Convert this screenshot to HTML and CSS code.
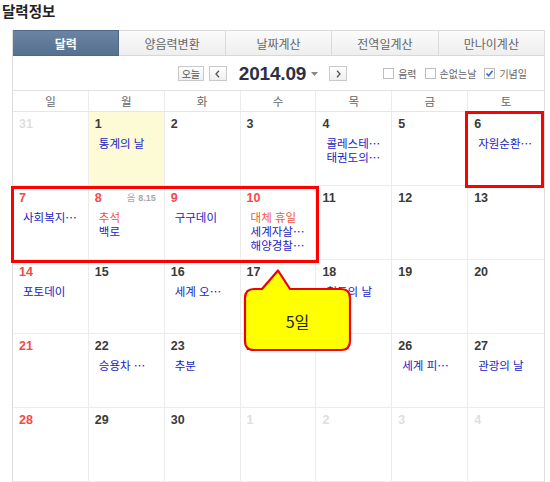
FILE: index.html
```html
<!DOCTYPE html>
<html lang="ko">
<head>
<meta charset="utf-8">
<link rel="stylesheet" href="styles.css">
</head>
<body>
<div class="page">
  <h1 class="title">달력정보</h1>
  <div class="cal">
    <div class="tabs">
      <div class="tab active">달력</div>
      <div class="tab">양음력변환</div>
      <div class="tab">날짜계산</div>
      <div class="tab">전역일계산</div>
      <div class="tab">만나이계산</div>
    </div>
    <div class="toolbar">
      <div class="tb-left">
        <span class="btn today">오늘</span>
        <span class="btn arrow"><svg width="5" height="8" viewBox="0 0 5 8"><path d="M4 0.8 L1 4 L4 7.2" fill="none" stroke="#555" stroke-width="1.3"/></svg></span>
      </div>
      <div class="ym">2014.09<svg class="caret" width="7" height="4" viewBox="0 0 7 4"><path d="M0 0 H7 L3.5 4 Z" fill="#888"/></svg></div>
      <div class="tb-right">
        <span class="btn arrow"><svg width="5" height="8" viewBox="0 0 5 8"><path d="M1 0.8 L4 4 L1 7.2" fill="none" stroke="#555" stroke-width="1.3"/></svg></span>
        <div class="opts">
          <span class="cb"></span><span class="opt-label">음력</span>
          <span class="cb"></span><span class="opt-label">손없는날</span>
          <span class="cb checked"><svg width="9" height="9" viewBox="0 0 9 9"><path d="M1.5 4.5 L3.6 6.8 L7.6 1.8" fill="none" stroke="#2f6fd6" stroke-width="1.6"/></svg></span><span class="opt-label">기념일</span>
        </div>
      </div>
    </div>
    <div class="week-head">
      <div>일</div><div>월</div><div>화</div><div>수</div><div>목</div><div>금</div><div>토</div>
    </div>
    <div class="grid">
      <div class="cell"><div class="num other">31</div></div>
      <div class="cell today-cell"><div class="num">1</div><div class="ev">통계의 날</div></div>
      <div class="cell"><div class="num">2</div></div>
      <div class="cell"><div class="num">3</div></div>
      <div class="cell"><div class="num">4</div><div class="ev">콜레스테…</div><div class="ev">태권도의…</div></div>
      <div class="cell"><div class="num">5</div></div>
      <div class="cell"><div class="num">6</div><div class="ev">자원순환…</div></div>

      <div class="cell"><div class="num red">7</div><div class="ev">사회복지…</div></div>
      <div class="cell"><div class="num red">8</div><span class="lunar">음 <b>8.15</b></span><div class="ev hol">추석</div><div class="ev">백로</div></div>
      <div class="cell"><div class="num red">9</div><div class="ev">구구데이</div></div>
      <div class="cell"><div class="num red">10</div><div class="ev hol">대체 휴일</div><div class="ev">세계자살…</div><div class="ev">해양경찰…</div></div>
      <div class="cell"><div class="num">11</div></div>
      <div class="cell"><div class="num">12</div></div>
      <div class="cell"><div class="num">13</div></div>

      <div class="cell"><div class="num red">14</div><div class="ev">포토데이</div></div>
      <div class="cell"><div class="num">15</div></div>
      <div class="cell"><div class="num">16</div><div class="ev">세계 오…</div></div>
      <div class="cell"><div class="num">17</div></div>
      <div class="cell"><div class="num">18</div><div class="ev">철도의 날</div></div>
      <div class="cell"><div class="num">19</div></div>
      <div class="cell"><div class="num">20</div></div>

      <div class="cell"><div class="num red">21</div></div>
      <div class="cell"><div class="num">22</div><div class="ev">승용차 …</div></div>
      <div class="cell"><div class="num">23</div><div class="ev">추분</div></div>
      <div class="cell"><div class="num">24</div></div>
      <div class="cell"><div class="num">25</div></div>
      <div class="cell"><div class="num">26</div><div class="ev">세계 피…</div></div>
      <div class="cell"><div class="num">27</div><div class="ev">관광의 날</div></div>

      <div class="cell"><div class="num red">28</div></div>
      <div class="cell"><div class="num">29</div></div>
      <div class="cell"><div class="num">30</div></div>
      <div class="cell"><div class="num other">1</div></div>
      <div class="cell"><div class="num other">2</div></div>
      <div class="cell"><div class="num other">3</div></div>
      <div class="cell"><div class="num other">4</div></div>
    </div>
  </div>

  <div class="mark mark-sat"></div>
  <div class="mark mark-week"></div>
  <div class="callout">
    <svg width="110" height="86" viewBox="0 0 110 86"><path d="M11 21 H19 L35 2.5 L47 21 H98 Q107 21 107 30 V73 Q107 82 98 82 H11 Q2 82 2 73 V30 Q2 21 11 21 Z" fill="#ffff00" stroke="#ee0000" stroke-width="2.2" stroke-linejoin="round"/></svg>
    <span class="callout-text">5일</span>
  </div>
</div>
</body>
</html>
```

FILE: styles.css
```css
* { box-sizing: border-box; }
body {
  margin: 0;
  background: #fff;
  font-family: "Noto Sans CJK KR", "Noto Sans", sans-serif;
  color: #333;
}
.page {
  position: relative;
  width: 550px;
  height: 482px;
  overflow: hidden;
}
.title {
  margin: 0;
  height: 30px;
  padding: 3px 0 0 2px;
  font-size: 14.5px;
  line-height: 16px;
  font-weight: bold;
  color: #222;
}
.cal {
  margin-left: 12px;
  width: 533px;
  border-left: 1px solid #dcdcdc;
  border-right: 1px solid #dcdcdc;
}
.tabs {
  display: flex;
  height: 26px;
}
.tab {
  flex: 1;
  display: flex;
  align-items: center;
  justify-content: center;
  font-size: 12px;
  color: #666;
  background: linear-gradient(#fbfbfb, #eeeeee);
  border-top: 1px solid #d8d8d8;
  border-bottom: 1px solid #d8d8d8;
  border-right: 1px solid #dadada;
}
.tab:last-child { border-right: 0; }
.tab.active {
  background: linear-gradient(#6b84a3, #56708f);
  border-color: #4f6787;
  color: #fff;
  font-weight: bold;
}
.toolbar {
  display: grid;
  grid-template-columns: 1fr auto 1fr;
  align-items: center;
  height: 35px;
  border-bottom: 1px solid #e2e2e2;
  padding-top: 1px;
}
.tb-left {
  display: flex;
  justify-content: flex-end;
  align-items: center;
  gap: 5px;
  padding-right: 12px;
}
.tb-right {
  display: flex;
  align-items: center;
  padding-left: 11px;
}
.btn {
  display: inline-flex;
  align-items: center;
  justify-content: center;
  height: 15px;
  border: 1px solid #c9c9c9;
  background: linear-gradient(#ffffff, #efefef);
  color: #555;
}
.today {
  width: 26px;
  font-size: 10px;
  line-height: 13px;
}
.arrow { width: 18px; }
.ym {
  display: flex;
  align-items: center;
  font-family: "Liberation Sans", Arial, sans-serif;
  font-weight: bold;
  font-size: 19px;
  color: #2b3048;
  letter-spacing: -0.2px;
}
.caret { margin-left: 5px; margin-top: 1px; }
.opts {
  margin-left: auto;
  display: flex;
  align-items: center;
  padding-right: 17px;
}
.cb {
  width: 11px;
  height: 11px;
  border: 1px solid #bdbdbd;
  background: #fff;
  display: inline-flex;
  align-items: center;
  justify-content: center;
  margin-right: 4px;
}
.opt-label {
  font-size: 10px;
  color: #666;
  margin-right: 8px;
}
.opt-label:last-child { margin-right: 0; }
.week-head {
  display: grid;
  grid-template-columns: repeat(7, 1fr);
  height: 21px;
  border-bottom: 1px solid #e6e6e6;
}
.week-head div {
  display: flex;
  align-items: center;
  justify-content: center;
  font-size: 11.5px;
  color: #666;
  border-right: 1px solid #ececec;
}
.week-head div:last-child { border-right: 0; }
.grid {
  display: grid;
  grid-template-columns: repeat(7, 1fr);
  grid-auto-rows: 74px;
}
.cell {
  position: relative;
  border-right: 1px solid #ececec;
  border-bottom: 1px solid #ececec;
  padding-top: 5px;
}
.cell:nth-child(7n) { border-right: 0; }
.today-cell { background: #fcfbd6; }
.num {
  font-family: "Liberation Sans", Arial, sans-serif;
  font-weight: bold;
  font-size: 12.5px;
  line-height: 14px;
  padding-left: 6px;
  color: #3a3a3a;
  margin-bottom: 5px;
}
.num.red { color: #f24a4a; }
.num.other { color: #dedede; }
.ev {
  padding-left: 10px;
  font-size: 11.5px;
  line-height: 14px;
  color: #2222c2;
  white-space: nowrap;
}
.ev.hol { color: #f0553f; }
.lunar {
  position: absolute;
  top: 5px;
  right: 8px;
  font-size: 9.5px;
  line-height: 12px;
  color: #a8a8a8;
}
.lunar b {
  font-family: "Liberation Sans", Arial, sans-serif;
  font-size: 9px;
}
.mark {
  position: absolute;
  border: 3px solid #ff0000;
}
.mark-sat {
  left: 465px;
  top: 111px;
  width: 79px;
  height: 77px;
}
.mark-week {
  left: 11px;
  top: 186px;
  width: 308px;
  height: 77px;
}
.callout {
  position: absolute;
  left: 243px;
  top: 268px;
  width: 110px;
  height: 86px;
}
.callout svg { display: block; }
.callout-text {
  position: absolute;
  left: 2px;
  right: 3px;
  top: 42px;
  text-align: center;
  font-size: 16px;
  line-height: 22px;
  color: #222;
}
```
